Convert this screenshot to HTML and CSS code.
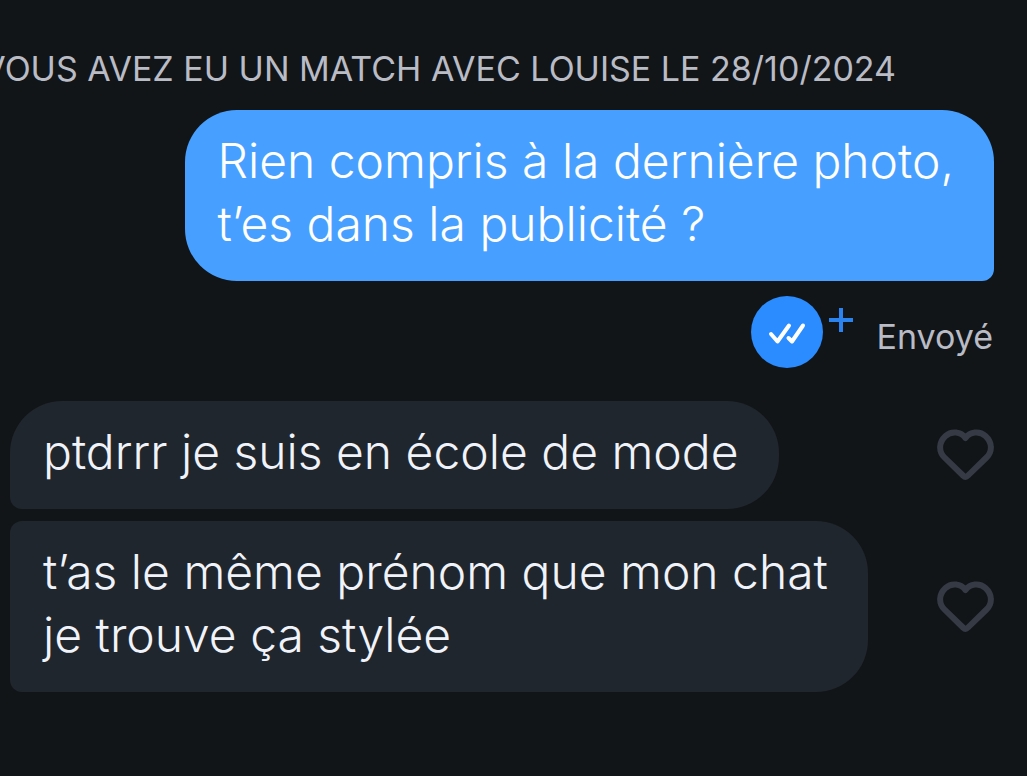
FILE: index.html
```html
<!DOCTYPE html>
<html lang="fr">
<head>
<meta charset="utf-8">
<meta name="viewport" content="width=device-width, initial-scale=1">
<title>Conversation avec Louise</title>
<link rel="stylesheet" href="styles.css">
</head>
<body>
<main class="chat">
  <header class="match-date">
    <h1 class="match-title">VOUS AVEZ EU UN MATCH AVEC LOUISE LE 28/10/2024</h1>
  </header>

  <section class="sent">
    <p class="bubble bubble-sent">Rien compris à la dernière photo,<br>t’es dans la publicité ?</p>
    <div class="receipt">
      <svg class="receipt-badge" viewBox="0 0 72 72" aria-hidden="true">
        <circle cx="36" cy="36" r="36" fill="#2b8cff"/>
        <path d="M20 38L26.500 45.500L38 29.500M37.500 42L41 45.500L52 29.500" fill="none" stroke="#fff" stroke-width="4" stroke-linecap="round" stroke-linejoin="round"/>
      </svg>
      <svg class="receipt-plus" viewBox="0 0 24 24" aria-hidden="true">
        <path d="M12 0V24M0 12H24" stroke="#2b83f0" stroke-width="4"/>
      </svg>
      <span class="receipt-label">Envoyé</span>
    </div>
  </section>

  <section class="received">
    <div class="message">
      <p class="bubble bubble-first">ptdrrr je suis en école de mode</p>
      <button class="like" type="button" aria-label="Aimer le message">
        <svg class="heart" viewBox="0 0 57 52" aria-hidden="true">
          <path d="M28.500 9C24 2.500 14.500 1.500 8.500 7C1.500 13.500 1.500 22.500 7.500 28.500L26 46.500Q28.500 49 31 46.500L49.500 28.500C55.500 22.500 55.500 13.500 48.500 7C42.500 1.500 33 2.500 28.500 9Z"/>
        </svg>
      </button>
    </div>
    <div class="message">
      <p class="bubble bubble-last">t’as le même prénom que mon chat<br>je trouve ça stylée</p>
      <button class="like" type="button" aria-label="Aimer le message">
        <svg class="heart" viewBox="0 0 57 52" aria-hidden="true">
          <path d="M28.500 9C24 2.500 14.500 1.500 8.500 7C1.500 13.500 1.500 22.500 7.500 28.500L26 46.500Q28.500 49 31 46.500L49.500 28.500C55.500 22.500 55.500 13.500 48.500 7C42.500 1.500 33 2.500 28.500 9Z"/>
        </svg>
      </button>
    </div>
  </section>
</main>
</body>
</html>
```

FILE: styles.css
```css
* {
  box-sizing: border-box;
}

body {
  margin: 0;
  min-height: 100vh;
  background: #111518;
  color: #f1f3fa;
  font-family: Inter, "Liberation Sans", sans-serif;
  overflow-x: hidden;
}

.chat {
  padding: 49px 33px 49px 10px;
}

.match-date {
  display: flex;
  justify-content: flex-end;
  padding-right: 98px;
  margin-bottom: 21px;
}

.match-title {
  margin: 0;
  color: #b9bbc5;
  font-size: 34px;
  font-weight: 400;
  line-height: 40px;
  white-space: nowrap;
}

.sent {
  display: flex;
  flex-direction: column;
  align-items: flex-end;
  gap: 15px;
  margin-bottom: 33px;
}

.bubble {
  margin: 0;
  padding: 19px 40px 26px 33px;
  background: #20262d;
  font-size: 48px;
  font-weight: 330;
  line-height: 63px;
}

.bubble-sent {
  background: #47a0ff;
  color: #fff;
  border-radius: 52px 52px 12px 52px;
}

.bubble-first {
  border-radius: 52px 52px 52px 12px;
}

.bubble-last {
  border-radius: 12px 52px 52px 12px;
}

.receipt {
  display: flex;
  align-items: flex-start;
  padding-right: 1px;
}

.receipt-badge {
  width: 72px;
  height: 72px;
}

.receipt-plus {
  width: 24px;
  height: 24px;
  margin: 12px 24px 0 6px;
}

.receipt-label {
  margin-top: 21px;
  color: #b9bbc5;
  font-size: 34px;
  line-height: 40px;
}

.received {
  display: flex;
  flex-direction: column;
  gap: 12px;
}

.message {
  display: flex;
  align-items: center;
  justify-content: space-between;
}

.like {
  flex: none;
  padding: 0;
  border: 0;
  background: none;
  cursor: pointer;
}

.heart {
  display: block;
  width: 57px;
  height: 52px;
  fill: none;
  stroke: #353a45;
  stroke-width: 6;
  stroke-linejoin: round;
}
```
